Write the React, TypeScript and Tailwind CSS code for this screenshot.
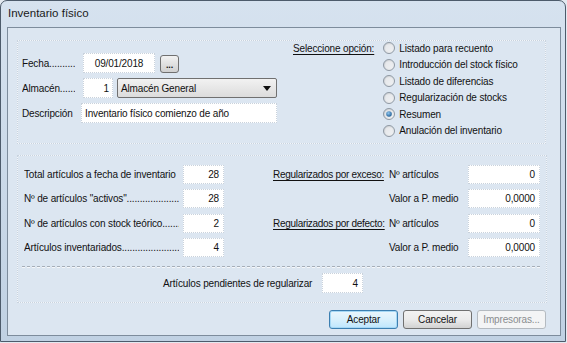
import React from "react";

const inputCls =
  "bg-white border border-dotted border-[#c9d2dc] flex items-center";

function Radio({ checked, id }: { checked?: boolean; id: string }) {
  return (
    <svg width="12" height="12" viewBox="0 0 12 12" className="shrink-0">
      <defs>
        <linearGradient id={`bg${id}`} x1="0" y1="0" x2="1" y2="1">
          <stop offset="0" stopColor="#c9ccd0" />
          <stop offset="1" stopColor="#f6f7f8" />
        </linearGradient>
        <radialGradient id={`dot${id}`} cx="0.4" cy="0.35" r="0.7">
          <stop offset="0" stopColor="#8fc5ef" />
          <stop offset="1" stopColor="#1c5a91" />
        </radialGradient>
      </defs>
      <circle cx="6" cy="6" r="5.5" fill={`url(#bg${id})`} stroke="#8e98a3" />
      <circle cx="6" cy="6" r="3.8" fill="#eef0f2" opacity="0.7" />
      {checked && <circle cx="6" cy="6" r="2.8" fill={`url(#dot${id})`} />}
    </svg>
  );
}

function Btn({
  children,
  focused,
  disabled,
}: {
  children: React.ReactNode;
  focused?: boolean;
  disabled?: boolean;
}) {
  const base =
    "w-[69px] h-[19px] rounded-[3px] border flex items-center justify-center text-[10px]";
  if (disabled)
    return (
      <div className={base + " border-[#b4bac0] bg-[#f3f4f5] text-[#8a8d90]"}>
        {children}
      </div>
    );
  if (focused)
    return (
      <div
        className={
          base +
          " border-[#3c7fb1] bg-gradient-to-b from-[#eaf6fd] via-[#d9f0fc] to-[#bee6fd] shadow-[inset_0_0_0_1px_#a6d8f5]"
        }
      >
        {children}
      </div>
    );
  return (
    <div
      className={
        base +
        " border-[#707070] bg-gradient-to-b from-[#f2f2f2] via-[#ebebeb] to-[#d2d2d2]"
      }
    >
      {children}
    </div>
  );
}

function Clip({ w, text }: { w: number; text: string }) {
  return (
    <span
      className="block overflow-hidden whitespace-nowrap"
      style={{ width: w }}
    >
      {text}
    </span>
  );
}

export default function App() {
  const dots = "......................................................";
  const radios = [
    "Listado para recuento",
    "Introducción del stock físico",
    "Listado de diferencias",
    "Regularización de stocks",
    "Resumen",
    "Anulación del inventario",
  ];
  return (
    <div className="w-[567px] h-[343px] bg-[#e3e9f0] font-['Liberation_Sans',Arial,sans-serif] text-[10px] tracking-[-0.15px] text-[#111]">
      <div className="w-[566px] h-[342px] rounded-t-[7px] border border-[#4d5b6b] bg-gradient-to-b from-[#d6e2ef] to-[#c0d1e3] pl-[6px] pr-[4px] pb-[5px] flex flex-col">
        <div className="h-[26px] flex items-center pl-[1px] text-[11.5px] tracking-normal text-[#1a1a1a]">
          Inventario físico
        </div>
        <div className="flex-1 border border-[#7d8c9c] bg-[#dce6f1] flex flex-col pl-[9px] pt-[12px]">
          {/* Panel 1 */}
          <div className="w-[529px] h-[104px] border border-[#f3f6fa] outline outline-1 outline-dotted outline-[#c9d3de] -outline-offset-1 flex">
            <div className="w-[275px] pl-[4px] pt-[12px] flex flex-col gap-[5px]">
              <div className="h-[20px] flex items-center">
                <div className="w-[61px]">
                  <Clip w={53} text={"Fecha" + dots} />
                </div>
                <div className={inputCls + " w-[72px] h-[20px] justify-center"}>
                  09/01/2018
                </div>
                <div className="ml-[5px] mt-[2px] w-[19px] h-[18px] rounded-[3px] border border-[#707070] bg-gradient-to-b from-[#f2f2f2] to-[#d0d0d0] flex items-end justify-center pb-[2px] leading-none font-bold text-[9px]">
                  ...
                </div>
              </div>
              <div className="h-[20px] flex items-center">
                <div className="w-[61px]">
                  <Clip w={53} text={"Almacén" + dots} />
                </div>
                <div className={inputCls + " w-[30px] h-[20px] justify-end pr-[3px]"}>
                  1
                </div>
                <div className="ml-[4px] w-[160px] h-[20px] rounded-[2px] border border-[#707070] bg-gradient-to-b from-[#f2f2f2] to-[#dcdcdc] flex items-center pl-[3px] pr-[5px]">
                  <span className="flex-1">Almacén General</span>
                  <svg width="8" height="5" viewBox="0 0 8 5">
                    <path d="M0 0 H8 L4 5 Z" fill="#111" />
                  </svg>
                </div>
              </div>
              <div className="h-[20px] flex items-center">
                <div className="w-[59px]">Descripción</div>
                <div className={inputCls + " w-[196px] h-[20px] pl-[3px]"}>
                  Inventario físico comienzo de año
                </div>
              </div>
            </div>
            <div className="flex -mt-px">
              <div className="h-[16.5px] flex items-center underline underline-offset-2">
                Seleccione opción:
              </div>
              <div className="ml-[9px] flex flex-col">
                {radios.map((r, i) => (
                  <div key={r} className="h-[16.5px] flex items-center gap-[4px]">
                    <Radio id={String(i)} checked={i === 4} />
                    <span>{r}</span>
                  </div>
                ))}
              </div>
            </div>
          </div>

          {/* Panel 2 */}
          <div className="mt-[11px] w-[530px] h-[148px] border border-[#f3f6fa] outline outline-1 outline-dotted outline-[#c9d3de] -outline-offset-1 flex flex-col pt-[6px]">
            <div className="flex pl-[6px]">
              <div className="flex flex-col">
                {[
                  ["Total artículos a fecha de inventario", "28"],
                  ['Nº de artículos "activos"' + dots, "28"],
                  ["Nº de artículos con stock teórico" + dots, "2"],
                  ["Artículos inventariados" + dots, "4"],
                ].map(([l, v]) => (
                  <div key={l} className="h-[24.5px] flex items-center">
                    <div className="w-[159px]">
                      <Clip w={155} text={l} />
                    </div>
                    <div className={inputCls + " w-[41px] h-[19px] justify-end pr-[4px]"}>
                      {v}
                    </div>
                  </div>
                ))}
              </div>
              <div className="ml-[49px] flex flex-col">
                {[
                  ["Regularizados por exceso:", "Nº artículos", "0"],
                  ["", "Valor a P. medio", "0,0000"],
                  ["Regularizados por defecto:", "Nº artículos", "0"],
                  ["", "Valor a P. medio", "0,0000"],
                ].map(([a, b, v], i) => (
                  <div key={i} className="h-[24.5px] flex items-center">
                    <div className="w-[116px] whitespace-nowrap tracking-[-0.3px]">
                      <span className="underline underline-offset-2">{a}</span>
                    </div>
                    <div className="w-[79px] whitespace-nowrap">{b}</div>
                    <div className={inputCls + " w-[72px] h-[19px] justify-end pr-[4px]"}>
                      {v}
                    </div>
                  </div>
                ))}
              </div>
            </div>
            <div className="mt-[6px] ml-[4px] w-[518px] border-t border-dashed border-t-[#a6aeb8] border-b border-b-[#f6f8fb]" />
            <div className="mt-[5px] pl-[145px] h-[20px] flex items-center">
              <div className="w-[159px] whitespace-nowrap">Artículos pendientes de regularizar</div>
              <div className={inputCls + " w-[41px] h-[20px] justify-end pr-[4px]"}>
                4
              </div>
            </div>
          </div>

          {/* Buttons */}
          <div className="mt-[7px] pr-[14px] flex justify-end gap-[5px]">
            <Btn focused>Aceptar</Btn>
            <Btn>Cancelar</Btn>
            <Btn disabled>Impresoras...</Btn>
          </div>
        </div>
      </div>
    </div>
  );
}
